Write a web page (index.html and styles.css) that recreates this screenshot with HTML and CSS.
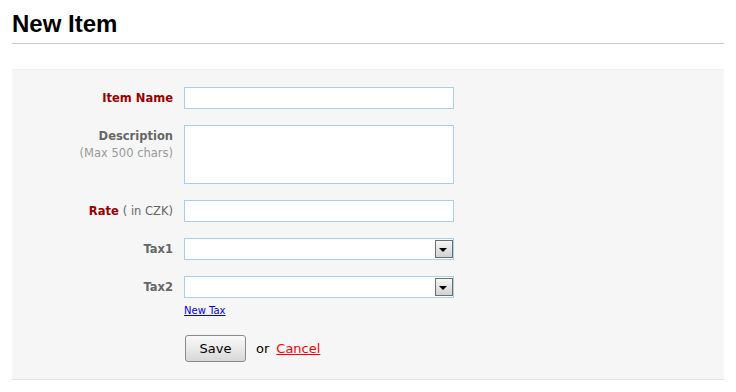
FILE: index.html
```html
<html>
<head>
    <title>New Item</title>
<link rel="stylesheet" href="styles.css">
</head>
<body>
  <div class="page">
    <h1 class="title">New Item</h1>
    <form class="box">
      <div class="row">
        <label class="label req" for="item-name">Item Name</label>
        <input class="field" type="text" id="item-name" autofocus>
      </div>
      <div class="row top">
        <label class="label" for="description">Description<span class="hint">(Max 500 chars)</span></label>
        <textarea class="field area" id="description"></textarea>
      </div>
      <div class="row">
        <label class="label req" for="rate">Rate <span class="unit">( in CZK)</span></label>
        <input class="field" type="text" id="rate">
      </div>
      <div class="row">
        <label class="label" for="tax1">Tax1</label>
        <div class="select">
          <select class="field" id="tax1"><option></option></select>
        </div>
      </div>
      <div class="row">
        <label class="label" for="tax2">Tax2</label>
        <div class="select">
          <select class="field" id="tax2"><option></option></select>
        </div>
      </div>
      <div class="row link-row">
        <span class="label"></span>
        <a href="#" class="new-tax">New Tax</a>
      </div>
      <div class="row actions">
        <span class="label"></span>
        <button type="button" class="save">Save</button>
        <span class="or">or</span>
        <a href="#" class="cancel">Cancel</a>
      </div>
    </form>
  </div>
</body>
</html>
```
FILE: styles.css
```css
body {
  margin: 0;
  background-color: #FFF;
  font-family: "DejaVu Sans", Verdana, sans-serif;
}

.page {
  padding: 0 12px;
  width: 712px;
}

.title {
  margin: 0;
  padding-top: 11px;
  height: 32px;
  font-family: "Liberation Sans", Arial, sans-serif;
  font-size: 24px;
  line-height: 26px;
  font-weight: bold;
  color: #000;
  border-bottom: 1px solid #c8c8c8;
}

.box {
  margin: 25px 0 0 0;
  padding: 17px 0 17px 0;
  background-color: #F6F6F6;
  border-top: 1px solid #F0F0F0;
  border-bottom: 1px solid #E2E2E2;
}

.row {
  display: flex;
  align-items: center;
  margin-bottom: 16px;
}

.row.top {
  align-items: flex-start;
}

.label {
  width: 161px;
  margin-right: 11px;
  flex-shrink: 0;
  text-align: right;
  font-size: 11.5px;
  font-weight: bold;
  color: #666;
}

.label.req {
  color: #990000;
}

.row.top .label {
  padding-top: 3px;
  line-height: 17px;
}

.hint {
  display: block;
  font-weight: normal;
  color: #999;
}

.unit {
  font-weight: normal;
  color: #666;
}

.field {
  box-sizing: border-box;
  width: 270px;
  height: 22px;
  margin: 0;
  padding: 2px 4px;
  border: 1px solid #A8D0E6;
  background-color: #FFF;
  font-family: "DejaVu Sans", Verdana, sans-serif;
  font-size: 12px;
  outline: none;
  border-radius: 0;
}

.field.area {
  height: 59px;
  resize: none;
}

.select {
  position: relative;
  width: 270px;
  height: 22px;
}

.select select {
  appearance: none;
  -webkit-appearance: none;
}

.select::after {
  content: "";
  position: absolute;
  right: 1px;
  top: 2px;
  width: 18px;
  height: 18px;
  box-sizing: border-box;
  border: 1px solid #6E6E6E;
  background: linear-gradient(#F6F6F6, #D2D2D2);
  pointer-events: none;
}

.select::before {
  content: "";
  position: absolute;
  right: 7px;
  top: 10px;
  width: 0;
  height: 0;
  border-left: 4px solid transparent;
  border-right: 4px solid transparent;
  border-top: 4px solid #000;
  z-index: 1;
  pointer-events: none;
}

.link-row {
  margin-top: -9px;
  margin-bottom: 18px;
}

.new-tax {
  font-size: 10px;
  line-height: 12px;
  color: #0000EE;
  text-decoration: underline;
}

.actions {
  margin-bottom: 0;
}

.save {
  margin-left: 1px;
  width: 61px;
  height: 27px;
  background: linear-gradient(#FAFAFA, #D8D8D8);
  border: 1px solid #8A8A8A;
  border-radius: 3px;
  font-family: "DejaVu Sans", Verdana, sans-serif;
  font-size: 13px;
  color: #000;
  padding: 0;
  cursor: pointer;
}

.or {
  margin-left: 10px;
  font-size: 13px;
  color: #000;
}

.cancel {
  margin-left: 7px;
  font-size: 13px;
  color: #FF0000;
  text-decoration: underline;
}
```
